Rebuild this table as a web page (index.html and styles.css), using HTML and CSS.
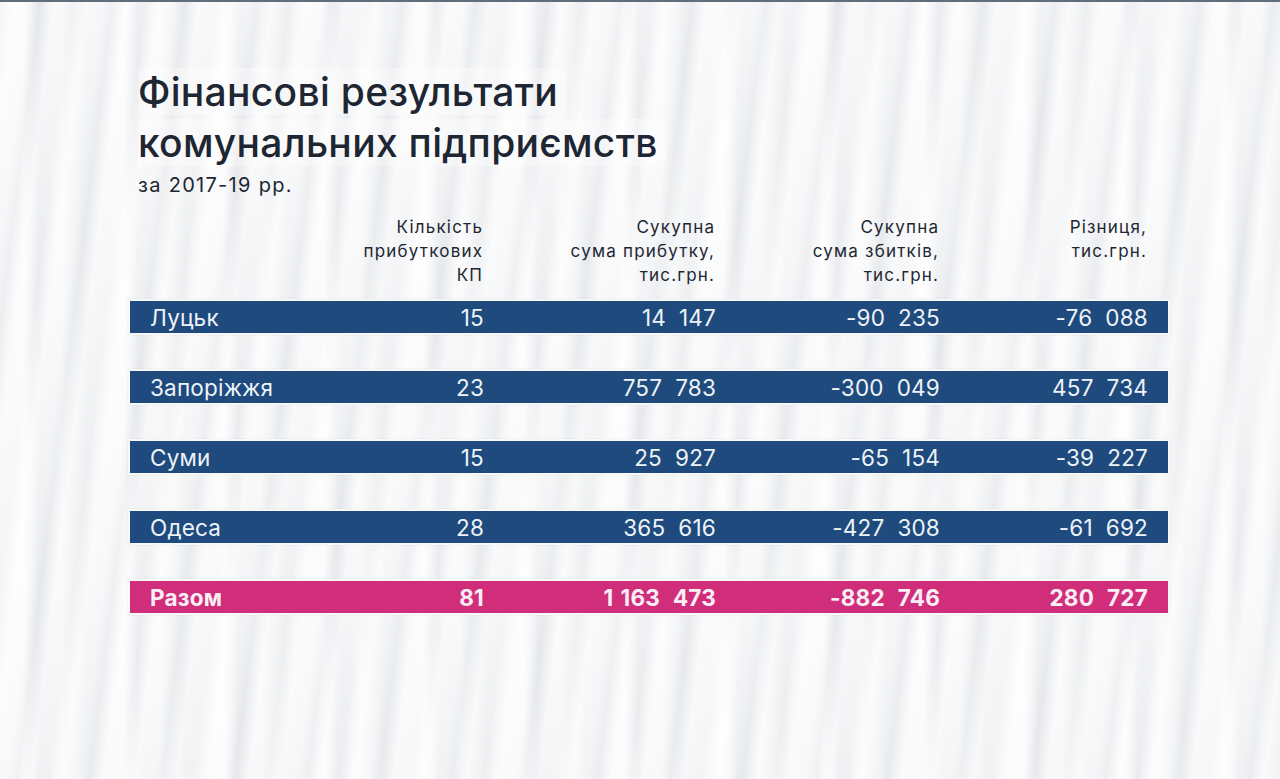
FILE: index.html
```html
<!DOCTYPE html>
<html lang="uk">
<head>
<meta charset="utf-8">
<title>Фінансові результати комунальних підприємств</title>
<link rel="stylesheet" href="styles.css">
</head>
<body>
<div class="page">
  <div class="topline"></div>
  <header class="heading">
    <h1 class="title"><span class="hl">Фінансові результати</span><br><span class="hl">комунальних підприємств</span></h1>
    <p class="subtitle">за 2017-19 рр.</p>
  </header>
  <section class="table">
    <div class="grid head">
      <div class="c city"></div>
      <div class="c">Кількість<br>прибуткових<br>КП</div>
      <div class="c">Сукупна<br>сума прибутку,<br>тис.грн.</div>
      <div class="c">Сукупна<br>сума збитків,<br>тис.грн.</div>
      <div class="c">Різниця,<br>тис.грн.</div>
    </div>
    <div class="grid row">
      <div class="c city">Луцьк</div>
      <div class="c">15</div>
      <div class="c">14<span class="g"></span>147</div>
      <div class="c">-90<span class="g"></span>235</div>
      <div class="c">-76<span class="g"></span>088</div>
    </div>
    <div class="grid row">
      <div class="c city">Запоріжжя</div>
      <div class="c">23</div>
      <div class="c">757<span class="g"></span>783</div>
      <div class="c">-300<span class="g"></span>049</div>
      <div class="c">457<span class="g"></span>734</div>
    </div>
    <div class="grid row">
      <div class="c city">Суми</div>
      <div class="c">15</div>
      <div class="c">25<span class="g"></span>927</div>
      <div class="c">-65<span class="g"></span>154</div>
      <div class="c">-39<span class="g"></span>227</div>
    </div>
    <div class="grid row">
      <div class="c city">Одеса</div>
      <div class="c">28</div>
      <div class="c">365<span class="g"></span>616</div>
      <div class="c">-427<span class="g"></span>308</div>
      <div class="c">-61<span class="g"></span>692</div>
    </div>
    <div class="grid row total">
      <div class="c city">Разом</div>
      <div class="c">81</div>
      <div class="c">1<span class="g1"></span>163<span class="g"></span>473</div>
      <div class="c">-882<span class="g"></span>746</div>
      <div class="c">280<span class="g"></span>727</div>
    </div>
  </section>
</div>
</body>
</html>
```
FILE: styles.css
```css
html, body {
  margin: 0;
  padding: 0;
}
body {
  width: 1280px;
  height: 779px;
  overflow: hidden;
  font-family: Inter, "Noto Sans", sans-serif;
  color: #1e2733;
  background-color: #eff0f2;
  background-image:
    repeating-linear-gradient(97deg,
      rgba(255,255,255,0) 0px, rgba(255,255,255,0.7) 14px, rgba(255,255,255,0.25) 30px,
      rgba(215,218,223,0.25) 40px, rgba(255,255,255,0.55) 54px, rgba(255,255,255,0) 72px),
    repeating-linear-gradient(90deg,
      #f3f4f6 0px, #fbfbfc 24px, #e9ebee 38px, #f6f7f8 60px, #eceef0 84px, #f3f4f6 100px);
}
.page {
  height: 779px;
}
.topline {
  height: 2px;
  background: #5f6d7c;
}
.heading {
  padding: 64px 0 0 138px;
}
.title {
  margin: 0;
  font-weight: 500;
  font-size: 39px;
  line-height: 51px;
  letter-spacing: 0.3px;
  color: #1d2632;
}
.hl {
  background: rgba(255,255,255,0.35);
  padding: 0 8px 0 0;
}
.subtitle {
  margin: 4px 0 0 0;
  font-size: 20px;
  line-height: 26px;
  letter-spacing: 1.3px;
  color: #1d2632;
}
.table {
  margin: 17px 0 0 128px;
  width: 1042px;
}
.grid {
  display: grid;
  grid-template-columns: 200px 134px 232px 224px 208px;
  padding: 0 20px;
}
.c {
  text-align: right;
  white-space: nowrap;
}
.c.city {
  text-align: left;
}
.head {
  font-size: 17px;
  line-height: 24px;
  letter-spacing: 1.2px;
  color: #1d2632;
  padding: 0 20px;
  margin-bottom: 12px;
}
.head .c {
  margin-right: -1.2px;
}
.row {
  height: 32px;
  align-items: center;
  background: #1e4a7d;
  border: 2px solid #f6f8fa;
  margin-bottom: 34px;
  font-size: 22.5px;
  letter-spacing: 0.2px;
  color: #eef3f8;
  box-shadow: 0 0 1px rgba(0,0,0,0.15);
}
.row.total {
  background: #d02e7b;
  font-weight: 700;
  color: #fbeef5;
}
.g {
  display: inline-block;
  width: 13px;
}
.g1 {
  display: inline-block;
  width: 7px;
}
```
